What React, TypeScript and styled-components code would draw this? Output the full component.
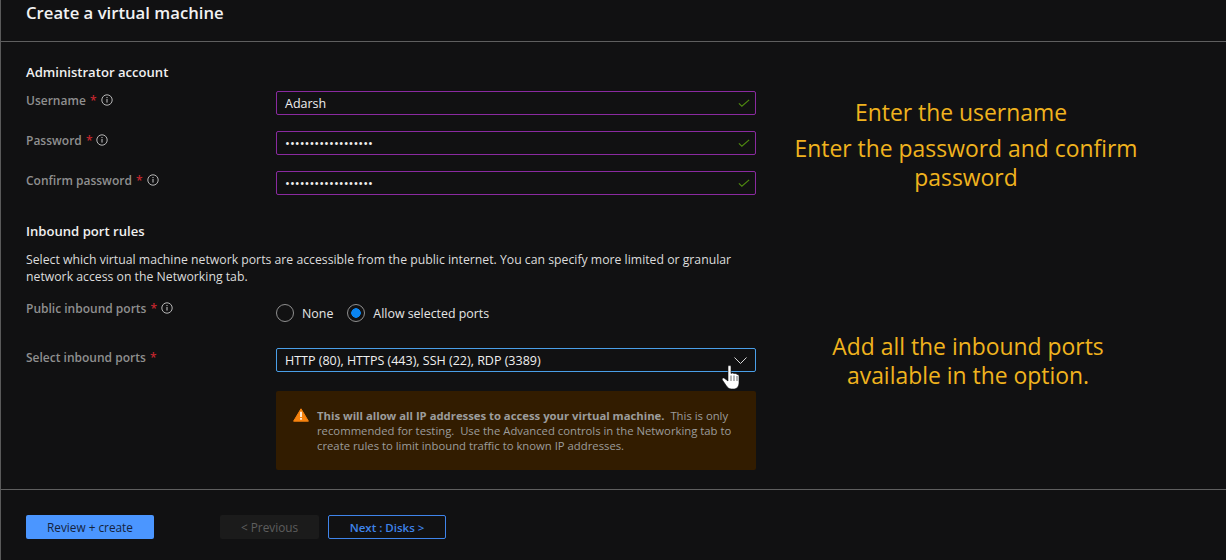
import React from "react";
import styled, { createGlobalStyle } from "styled-components";

const GlobalStyle = createGlobalStyle`
  html, body {
    margin: 0;
    padding: 0;
    background: #111112;
  }
  * {
    box-sizing: border-box;
  }
`;

const CHECK = "M1 5.5 L4.5 9 L13 1";

function InfoIcon() {
  return (
    <InfoSvg viewBox="0 0 12 12">
      <circle cx="6" cy="6" r="5.2" fill="none" stroke="#c8c8c8" strokeWidth="0.9" />
      <rect x="5.5" y="5" width="1" height="3.6" fill="#c8c8c8" />
      <rect x="5.5" y="3" width="1" height="1.1" fill="#c8c8c8" />
    </InfoSvg>
  );
}

function FieldLabel({ text, info = true }: { text: string; info?: boolean }) {
  return (
    <Label>
      {text} <Star>*</Star>
      {info && <InfoIcon />}
    </Label>
  );
}

function TextField({ label, value, secret }: { label: string; value: string; secret?: boolean }) {
  return (
    <FieldRow>
      <FieldLabel text={label} />
      <InputBox>
        <InputText $secret={secret}>{value}</InputText>
        <svg width="12" height="8" viewBox="0 0 14 10" preserveAspectRatio="none">
          <path d={CHECK} fill="none" stroke="#4f8a10" strokeWidth="1.3" />
        </svg>
      </InputBox>
    </FieldRow>
  );
}

export default function App() {
  return (
    <Page>
      <GlobalStyle />
      <Header>
        <Title>Create a virtual machine</Title>
      </Header>

      <Main>
        <Form>
          <Heading>Administrator account</Heading>
          <Fields>
            <TextField label="Username" value="Adarsh" />
            <TextField label="Password" value="••••••••••••••••••" secret />
            <TextField label="Confirm password" value="••••••••••••••••••" secret />
          </Fields>

          <PortsHeading>Inbound port rules</PortsHeading>
          <Description>
            Select which virtual machine network ports are accessible from the public internet. You can specify more limited or granular
            network access on the Networking tab.
          </Description>

          <RadioRow>
            <FieldLabel text="Public inbound ports" />
            <RadioGroup>
              <RadioOption>
                <Radio />
                None
              </RadioOption>
              <RadioOption>
                <Radio $checked />
                Allow selected ports
              </RadioOption>
            </RadioGroup>
          </RadioRow>

          <FieldRow>
            <FieldLabel text="Select inbound ports" info={false} />
            <SelectBox>
              <InputText>HTTP (80), HTTPS (443), SSH (22), RDP (3389)</InputText>
              <svg width="13" height="7" viewBox="0 0 13 7">
                <path d="M0.5 0.5 L6.5 6.500 L12.500 0.5" fill="none" stroke="#d8d8d8" strokeWidth="1" />
              </svg>
              <Pointer viewBox="0 0 17 24">
                <path
                  d="M6 1.500C6 .3 9 .3 9 1.500V8.500C10 7.800 11.500 7.800 12 8.800C13 8.200 14.500 8.500 15 9.500C16 9.300 17 10 17 11V17.500C17 21.500 15 24 11.500 24H9.500C7 24 5.500 22.500 4.500 21L.4 15C-.4 13.700 1 12.400 2.300 13.200L6 16Z"
                  fill="#ffffff"
                  stroke="#111112"
                  strokeWidth="0.6"
                />
                <path d="M9 10.500V16M12 10.500V16M15 11V16" stroke="#444" strokeWidth="0.8" />
              </Pointer>
            </SelectBox>
          </FieldRow>

          <Warning>
            <WarningIcon viewBox="0 0 16 14">
              <path d="M8 0.8 L15.400 13.200 H0.600 Z" fill="#f7830f" stroke="#f7830f" strokeLinejoin="round" />
              <rect x="7.200" y="3.800" width="1.600" height="5.200" fill="#fff" />
              <rect x="7.200" y="10" width="1.600" height="1.700" fill="#fff" />
            </WarningIcon>
            <WarningText>
              <strong>This will allow all IP addresses to access your virtual machine.</strong>
              {"  This is only recommended for testing.  Use the Advanced controls in the Networking tab to create rules to limit inbound traffic to known IP addresses."}
            </WarningText>
          </Warning>
        </Form>

        <Notes>
          <UsernameNote>Enter the username</UsernameNote>
          <PasswordNote>Enter the password and confirm password</PasswordNote>
          <PortsNote>Add all the inbound ports available in the option.</PortsNote>
        </Notes>
      </Main>

      <Footer>
        <PrimaryButton>Review + create</PrimaryButton>
        <PreviousButton>&lt; Previous</PreviousButton>
        <NextButton>Next : Disks &gt;</NextButton>
      </Footer>
    </Page>
  );
}

const Page = styled.div`
  width: 1226px;
  height: 560px;
  overflow: hidden;
  display: flex;
  flex-direction: column;
  background: #111112;
  border-left: 1px solid #5a5a5a;
  font-family: "Open Sans", "Liberation Sans", sans-serif;
  font-size: 12.25px;
  color: #e6e6e6;
`;

const Header = styled.header`
  height: 42px;
  flex: none;
  padding: 2px 0 0 25px;
  border-bottom: 1px solid #5f5f5f;
`;

const Title = styled.h1`
  margin: 0;
  font-size: 16.7px;
  line-height: 22px;
  font-weight: 600;
  color: #f2f2f2;
`;

const Main = styled.main`
  flex: none;
  height: 448px;
  display: flex;
  border-bottom: 1px solid #5f5f5f;
`;

const Form = styled.section`
  flex: none;
  width: 755px;
  padding: 21px 0 0 25px;
`;

const Heading = styled.h2`
  margin: 0;
  font-size: 13.1px;
  line-height: 18px;
  font-weight: 600;
  color: #f0f0f0;
`;

const PortsHeading = styled(Heading)`
  margin-top: 27px;
`;

const Fields = styled.div`
  display: flex;
  flex-direction: column;
  gap: 16px;
  margin-top: 10px;
`;

const FieldRow = styled.div`
  display: grid;
  grid-template-columns: 250px 480px;
`;

const RadioRow = styled(FieldRow)`
  margin-top: 14px;
  height: 49px;
`;

const Label = styled.div`
  display: flex;
  align-items: center;
  gap: 1px;
  height: 18px;
  font-size: 12px;
  color: #8f8f8f;
  font-weight: 600;
  white-space: pre;
`;

const Star = styled.span`
  color: #c4262e;
`;

const InfoSvg = styled.svg`
  width: 12px;
  height: 12px;
  margin-left: 3px;
`;

const InputBox = styled.div`
  position: relative;
  height: 24px;
  display: flex;
  align-items: center;
  justify-content: space-between;
  padding: 0 5px 0 8px;
  border: 1px solid #8a2aa0;
  border-radius: 2px;
`;

const SelectBox = styled(InputBox)`
  padding-right: 8px;
  border-color: #4a9fe8;
`;

const InputText = styled.span<{ $secret?: boolean }>`
  color: #efefef;
  font-size: ${(p) => (p.$secret ? "13px" : "12.5px")};
`;

const Pointer = styled.svg`
  position: absolute;
  left: 445px;
  top: 16px;
  width: 17px;
  height: 24px;
`;

const Description = styled.p`
  margin: 11px 0 0;
  width: 730px;
  line-height: 17px;
  color: #dcdcdc;
`;

const RadioGroup = styled.div`
  display: flex;
  align-items: center;
  gap: 14px;
  height: 18px;
  margin-top: 5px;
  font-size: 12.4px;
`;

const RadioOption = styled.label`
  display: flex;
  align-items: center;
  gap: 8px;
  color: #e6e6e6;
`;

const Radio = styled.span<{ $checked?: boolean }>`
  width: 18px;
  height: 18px;
  border-radius: 50%;
  border: 1px solid #8f8f8f;
  background: ${(p) => (p.$checked ? "radial-gradient(circle, #0a84f0 0 4.500px, transparent 5px)" : "none")};
`;

const Warning = styled.div`
  display: flex;
  align-items: flex-start;
  gap: 8px;
  margin: 19px 0 0 250px;
  width: 480px;
  height: 79px;
  padding: 17px 15px 0 17px;
  border-radius: 2px;
  background: #321c00;
  color: #9c9c9c;
  font-size: 11.3px;
  line-height: 15px;

  strong {
    font-weight: 700;
  }
`;

const WarningIcon = styled.svg`
  flex: none;
  width: 16px;
  height: 14px;
`;

const WarningText = styled.div`
  white-space: pre-wrap;
`;

const Notes = styled.aside`
  flex: none;
  width: 420px;
  display: flex;
  flex-direction: column;
  align-items: center;
  font-size: 22.9px;
  line-height: 29px;
  color: #f0b31e;
  text-align: center;
`;

const UsernameNote = styled.div`
  margin: 56px 10px 0 0;
`;

const PasswordNote = styled.div`
  margin-top: 7px;
  width: 360px;
`;

const PortsNote = styled.div`
  margin: 140px 0 0 4px;
  width: 300px;
`;

const Footer = styled.footer`
  display: flex;
  align-items: center;
  padding: 25px 0 0 25px;
`;

const BaseButton = styled.button`
  height: 24px;
  padding: 0;
  border-radius: 2px;
  font-family: inherit;
  font-size: 11.8px;
`;

const PrimaryButton = styled(BaseButton)`
  width: 128px;
  margin-right: 66px;
  border: 0;
  background: #4b96ff;
  color: #14233d;
`;

const PreviousButton = styled(BaseButton)`
  width: 99px;
  margin-right: 9px;
  border: 0;
  background: #1b1b1b;
  color: #5e5e5e;
`;

const NextButton = styled(BaseButton)`
  width: 118px;
  border: 1px solid #3f84ea;
  background: none;
  color: #3f84ea;
  font-size: 11.5px;
  font-weight: 600;
`;
